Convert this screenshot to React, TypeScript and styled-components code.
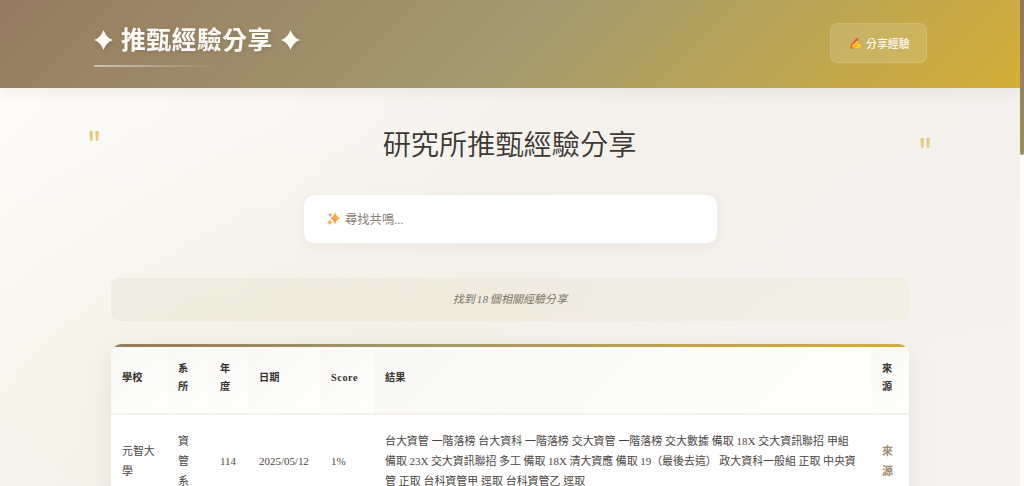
import { ReactNode } from "react";
import styled, { createGlobalStyle } from "styled-components";

const GlobalStyle = createGlobalStyle`
	* {
		box-sizing: border-box;
	}
	html,
	body {
		margin: 0;
		height: 100%;
		overflow: hidden;
	}
	body {
		font-family: "Liberation Serif", "Noto Sans CJK TC", serif;
		color: #3d3832;
	}
`;

const Window = styled.div`
	display: flex;
	height: 486px;
	overflow: hidden;
	background: #fdfcfa;
`;

const Page = styled.div`
	width: 1020px;
	height: 486px;
	overflow: hidden;
	background:
		radial-gradient(ellipse at 22% 80%, rgba(222, 205, 110, 0.08) 0%, transparent 50%),
		radial-gradient(ellipse at 80% 20%, rgba(139, 125, 105, 0.02) 0%, transparent 50%),
		linear-gradient(135deg, #fefdfa 0%, #f5f2ed 50%, #f5f4f0 100%);
`;

const ScrollTrack = styled.div`
	width: 4px;
	background: #fdfcfa;
`;

const ScrollThumb = styled.div`
	height: 155px;
	border-radius: 0 0 2px 2px;
	background: linear-gradient(180deg, #8e765a, #9a8d65);
`;

const Header = styled.header`
	display: flex;
	justify-content: space-between;
	align-items: flex-start;
	height: 88px;
	padding: 23px 93px 0 94px;
	background: linear-gradient(135deg, #967b5f 0%, #a29a70 50%, #d4af37 100%);
	box-shadow: 0 3px 14px rgba(139, 115, 85, 0.12);
`;

const Brand = styled.div`
	display: flex;
	flex-direction: column;
`;

const Logo = styled.h1`
	display: flex;
	align-items: center;
	gap: 8px;
	height: 34px;
	margin: 0;
	color: #fbf9f6;
	font: 700 24.8px/34px "Noto Sans CJK TC", sans-serif;
	letter-spacing: 0.5px;
	white-space: nowrap;
	filter: drop-shadow(1px 1px 2px rgba(0, 0, 0, 0.12));
`;

const LogoText = styled.span`
	margin-top: -5px;
`;

const Underline = styled.div`
	width: 124px;
	height: 2px;
	margin-top: 8px;
	background: linear-gradient(90deg, rgba(255, 255, 255, 0.5), transparent);
`;

const ShareButton = styled.button`
	display: flex;
	align-items: center;
	gap: 4px;
	width: 97px;
	height: 40px;
	padding: 0 0 0 18px;
	border: 1px solid rgba(255, 255, 255, 0.14);
	border-radius: 8px;
	background: rgba(255, 255, 255, 0.13);
	color: #fbf9f6;
	font: 500 10.9px "Noto Sans CJK TC", sans-serif;
	white-space: nowrap;
`;

const Main = styled.main`
	padding: 33px 111px 0;
`;

const TitleRow = styled.div`
	display: flex;
	justify-content: space-between;
	height: 46px;
	margin: 0 -23px 0 -24px;
`;

const Quote = styled.span<{ $drop?: number }>`
	width: 14px;
	margin-top: ${(p) => p.$drop ?? 0}px;
	color: #e2cb7b;
	font: 600 38px/40px "Open Sans", sans-serif;
	transform: scaleX(0.8);
	transform-origin: 3px 0;
`;

const Title = styled.h2`
	margin: 2px 0 0;
	height: 46px;
	color: #3d3832;
	font-size: 28.2px;
	font-weight: 350;
	line-height: 46px;
`;

const SearchBox = styled.div`
	display: flex;
	align-items: center;
	gap: 5px;
	width: 415px;
	height: 50px;
	margin: 27px auto 0 192px;
	padding: 0 0 1px 23px;
	border: 1px solid #f3efe9;
	border-radius: 11px;
	background: #fff;
	color: #8a8074;
	font-size: 12.3px;
	box-shadow: 0 3px 12px rgba(139, 115, 85, 0.08);
`;

const ResultCount = styled.div`
	height: 43px;
	margin-top: 34px;
	border-radius: 8px;
	background: linear-gradient(135deg, rgba(139, 130, 80, 0.07), rgba(212, 190, 90, 0.07));
	color: #7b7367;
	font-size: 11.05px;
	font-style: italic;
	line-height: 43px;
	text-align: center;
	word-spacing: -0.8px;
`;

const TableCard = styled.section`
	height: 260px;
	margin-top: 23px;
	border-radius: 11px;
	overflow: hidden;
	background: #fff;
	box-shadow: 0 7px 26px rgba(120, 110, 85, 0.12);
`;

const Accent = styled.div`
	height: 3px;
	background: linear-gradient(90deg, #967b5f, #a3966a 40%, #d4af37);
`;

const Table = styled.table`
	width: 798px;
	table-layout: fixed;
	border-collapse: separate;
	border-spacing: 0;
`;

const HeadCell = styled.th`
	height: 68px;
	padding: 0 11px 4px;
	border-bottom: 2px solid #f4f1ed;
	background: linear-gradient(135deg, #f9f8f6, #fefefd);
	color: #36322d;
	font-size: 10.2px;
	font-weight: 700;
	line-height: 18px;
	text-align: left;
	letter-spacing: 0.1px;
`;

const Latin = styled.span`
	letter-spacing: 0.6px;
`;

const Cell = styled.td`
	height: 91px;
	padding: 0 0 0 11px;
	color: #4a453f;
	font-size: 10.95px;
	line-height: 20px;
	vertical-align: middle;
`;

const SourceLink = styled.a`
	color: #a08a70;
	font-weight: 600;
`;

const Line = styled.div<{ $space?: number }>`
	white-space: nowrap;
	word-spacing: ${(p) => p.$space ?? 0}px;
`;

const columns: { width: number; label: ReactNode }[] = [
	{ width: 56, label: "學校" },
	{ width: 42, label: <><Line>系</Line><Line>所</Line></> },
	{ width: 39, label: <><Line>年</Line><Line>度</Line></> },
	{ width: 72, label: "日期" },
	{ width: 54, label: <Latin>Score</Latin> },
	{ width: 497, label: "結果" },
	{ width: 38, label: <><Line>來</Line><Line>源</Line></> },
];

const results = [
	{ text: "台大資管 一階落榜 台大資科 一階落榜 交大資管 一階落榜 交大數據 備取 18X 交大資訊聯招 甲組", space: 0.2 },
	{ text: "備取 23X 交大資訊聯招 多工 備取 18X 清大資應 備取 19（最後去這） 政大資科一般組 正取 中央資", space: -0.15 },
	{ text: "管 正取 台科資管甲 逕取 台科資管乙 逕取", space: 0.1 },
];

function StarIcon() {
	return (
		<svg width="19" height="20" viewBox="0 0 20 20" preserveAspectRatio="none" fill="currentColor">
			<path d="M10 0C11.8 4.8 15 8.3 20 10C15 11.7 11.8 15.2 10 20C8.2 15.2 5 11.7 0 10C5 8.3 8.2 4.8 10 0Z" />
		</svg>
	);
}

function WritingHandIcon() {
	return (
		<svg width="13" height="12" viewBox="0 0 24 24">
			<path d="M3 16L14 2Q17 1 18 4L12 16Z" fill="#ea4b3d" />
			<path d="M1 22L4 11L9 13L6 20Z" fill="#f0663b" />
			<path d="M5 17L11 11L15 7L18 9L16 13L22 14L23 20L15 23L5 21Z" fill="#ffca28" />
			<path d="M10 17L14 16M11 20L16 18" stroke="#e59620" strokeWidth="1.2" />
			<path d="M1 22H9" stroke="#d9574a" strokeWidth="1.8" />
		</svg>
	);
}

function SparklesIcon() {
	return (
		<svg width="13" height="13" viewBox="0 0 24 24">
			<defs>
				<linearGradient id="spark" x1="0" y1="1" x2="1" y2="0">
					<stop offset="0.2" stopColor="#ff8a65" />
					<stop offset="0.8" stopColor="#fdc02f" />
				</linearGradient>
			</defs>
			<g fill="url(#spark)">
				<path d="M15 0Q17.5 9 24 11.5Q17.5 14 15 23Q12.5 14 6 11.5Q12.5 9 15 0Z" />
				<path d="M6 1Q7 4 10 5Q7 6 6 9Q5 6 2 5Q5 4 6 1Z" />
				<path d="M5 14Q6.2 18 10 19Q6.2 20 5 24Q3.8 20 0 19Q3.8 18 5 14Z" />
			</g>
		</svg>
	);
}

export default function App() {
	return (
		<Window>
			<GlobalStyle />
			<Page>
				<Header>
					<Brand>
						<Logo>
							<StarIcon />
							<LogoText>推甄經驗分享</LogoText>
							<StarIcon />
						</Logo>
						<Underline />
					</Brand>
					<ShareButton>
						<WritingHandIcon />
						分享經驗
					</ShareButton>
				</Header>
				<Main>
					<TitleRow>
						<Quote $drop={2}>"</Quote>
						<Title>研究所推甄經驗分享</Title>
						<Quote $drop={9}>"</Quote>
					</TitleRow>
					<SearchBox>
						<SparklesIcon />
						尋找共鳴...
					</SearchBox>
					<ResultCount>找到 18 個相關經驗分享</ResultCount>
					<TableCard>
						<Accent />
						<Table>
							<colgroup>
								{columns.map((column, i) => (
									<col key={i} style={{ width: column.width }} />
								))}
							</colgroup>
							<thead>
								<tr>
									{columns.map((column, i) => (
										<HeadCell key={i}>{column.label}</HeadCell>
									))}
								</tr>
							</thead>
							<tbody>
								<tr>
									<Cell><Line>元智大</Line><Line>學</Line></Cell>
									<Cell><Line>資</Line><Line>管</Line><Line>系</Line></Cell>
									<Cell>114</Cell>
									<Cell>2025/05/12</Cell>
									<Cell>1%</Cell>
									<Cell>
										{results.map((line) => (
											<Line key={line.text} $space={line.space}>{line.text}</Line>
										))}
									</Cell>
									<Cell>
										<SourceLink><Line>來</Line><Line>源</Line></SourceLink>
									</Cell>
								</tr>
							</tbody>
						</Table>
					</TableCard>
				</Main>
			</Page>
			<ScrollTrack>
				<ScrollThumb />
			</ScrollTrack>
		</Window>
	);
}
